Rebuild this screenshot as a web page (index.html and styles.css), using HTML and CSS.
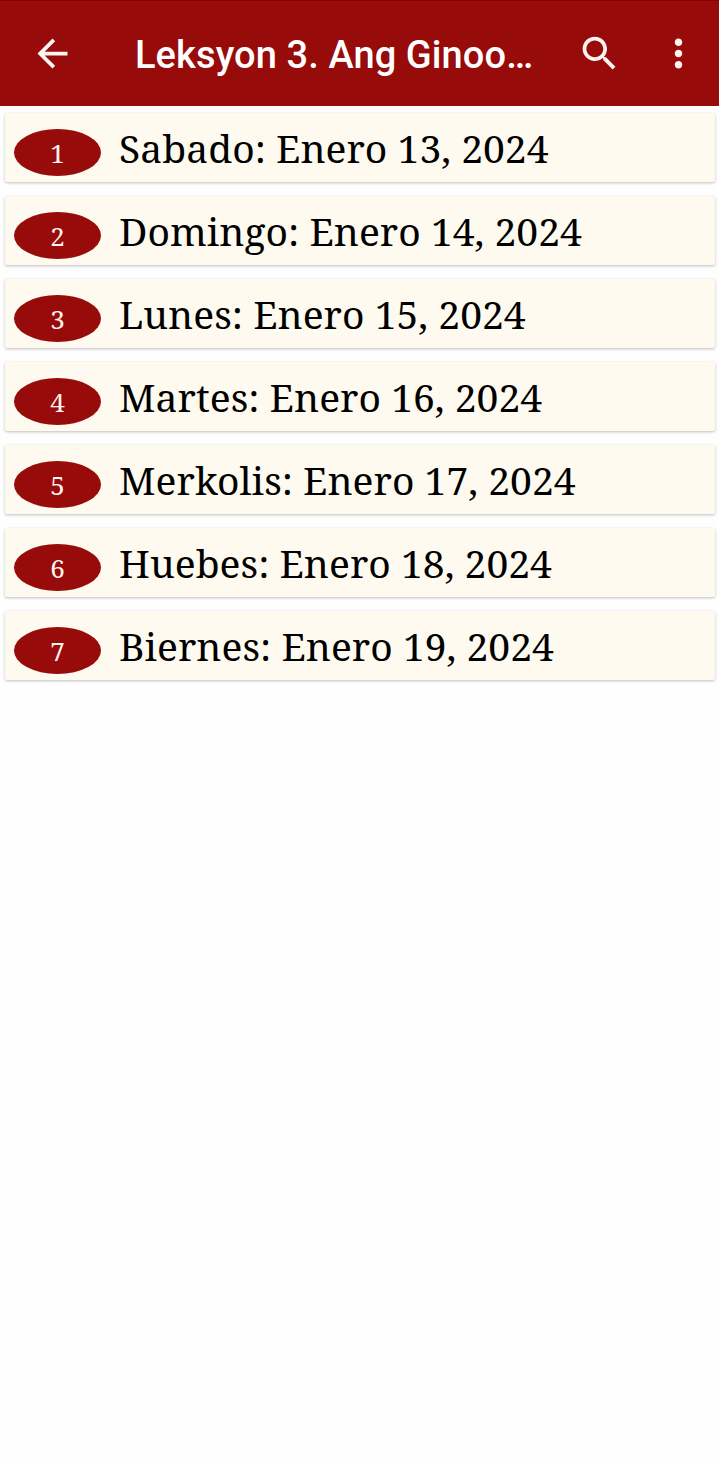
FILE: index.html
```
<!DOCTYPE html>
<html lang="ceb">

<head>
  <meta charset="UTF-8">
  <meta name="viewport" content="width=device-width, initial-scale=1.0">
  <title>Leksyon 3</title>
  <link rel="stylesheet" href="styles.css">
</head>

<body>
  <!-- Top bar -->
  <header class="app-bar">
    <svg class="icon back" viewBox="0 0 24 24"><path d="M20 11H7.83l5.59-5.59L12 4l-8 8 8 8 1.41-1.41L7.83 13H20v-2z"/></svg>
    <h1 class="title">Leksyon 3. Ang Ginoo…</h1>
    <svg class="icon search" viewBox="0 0 24 24"><path d="M15.5 14h-.79l-.28-.27C15.41 12.59 16 11.11 16 9.5 16 5.91 13.09 3 9.5 3S3 5.91 3 9.5 5.91 16 9.5 16c1.61 0 3.09-.59 4.23-1.57l.27.28v.79l5 4.99L20.49 19l-4.99-5zm-6 0C7.01 14 5 11.99 5 9.5S7.01 5 9.5 5 14 7.01 14 9.5 11.99 14 9.5 14z"/></svg>
    <svg class="icon more" viewBox="0 0 24 24"><path d="M12 8c1.1 0 2-.9 2-2s-.9-2-2-2-2 .9-2 2 .9 2 2 2zm0 2c-1.1 0-2 .9-2 2s.9 2 2 2 2-.9 2-2-.9-2-2-2zm0 6c-1.1 0-2 .9-2 2s.9 2 2 2 2-.9 2-2-.9-2-2-2z"/></svg>
  </header>

  <!-- Days of the lesson -->
  <main class="list">
    <div class="card"><span class="number">1</span><span class="day">Sabado: Enero 13, 2024</span></div>
    <div class="card"><span class="number">2</span><span class="day">Domingo: Enero 14, 2024</span></div>
    <div class="card"><span class="number">3</span><span class="day">Lunes: Enero 15, 2024</span></div>
    <div class="card"><span class="number">4</span><span class="day">Martes: Enero 16, 2024</span></div>
    <div class="card"><span class="number">5</span><span class="day">Merkolis: Enero 17, 2024</span></div>
    <div class="card"><span class="number">6</span><span class="day">Huebes: Enero 18, 2024</span></div>
    <div class="card"><span class="number">7</span><span class="day">Biernes: Enero 19, 2024</span></div>
  </main>
</body>
</html>
```
FILE: styles.css
```
* {
  box-sizing: border-box;
}

body {
  margin: 0;
  min-height: 100vh;
  background-color: #fefefe;
  font-family: "Noto Serif", "DejaVu Serif Condensed", "DejaVu Serif", serif;
}

.app-bar {
  display: flex;
  align-items: center;
  height: 106px;
  padding: 0 18px 1px 30px;
  border-top: 1px solid #870000;
  background-color: #980b0b;
  color: #fff;
}

.icon {
  flex: none;
  width: 45px;
  height: 45px;
  fill: #fff5f0;
}

.title {
  flex: 1;
  margin: 3px 0 0 60px;
  font-family: Roboto, sans-serif;
  font-size: 38px;
  font-weight: 500;
  letter-spacing: 0.1px;
  line-height: 46px;
  white-space: nowrap;
}

.more {
  margin-left: 34px;
}

.list {
  display: flex;
  flex-direction: column;
  gap: 14px;
  padding: 7px 4px 0 5px;
}

.card {
  display: flex;
  align-items: flex-start;
  height: 69px;
  padding-left: 9px;
  border-radius: 2px;
  background-color: #fefaef;
  box-shadow: 0 1px 3px rgba(0, 0, 0, 0.25);
}

.number {
  width: 87px;
  height: 47px;
  margin-top: 16px;
  border-radius: 50%;
  background-color: #980b0b;
  color: #fff5f0;
  font-size: 26px;
  line-height: 49px;
  text-align: center;
}

.day {
  margin: 8px 0 0 18px;
  color: #000;
  font-size: 39px;
  letter-spacing: 0.03px;
  line-height: 54px;
  white-space: nowrap;
}
```
